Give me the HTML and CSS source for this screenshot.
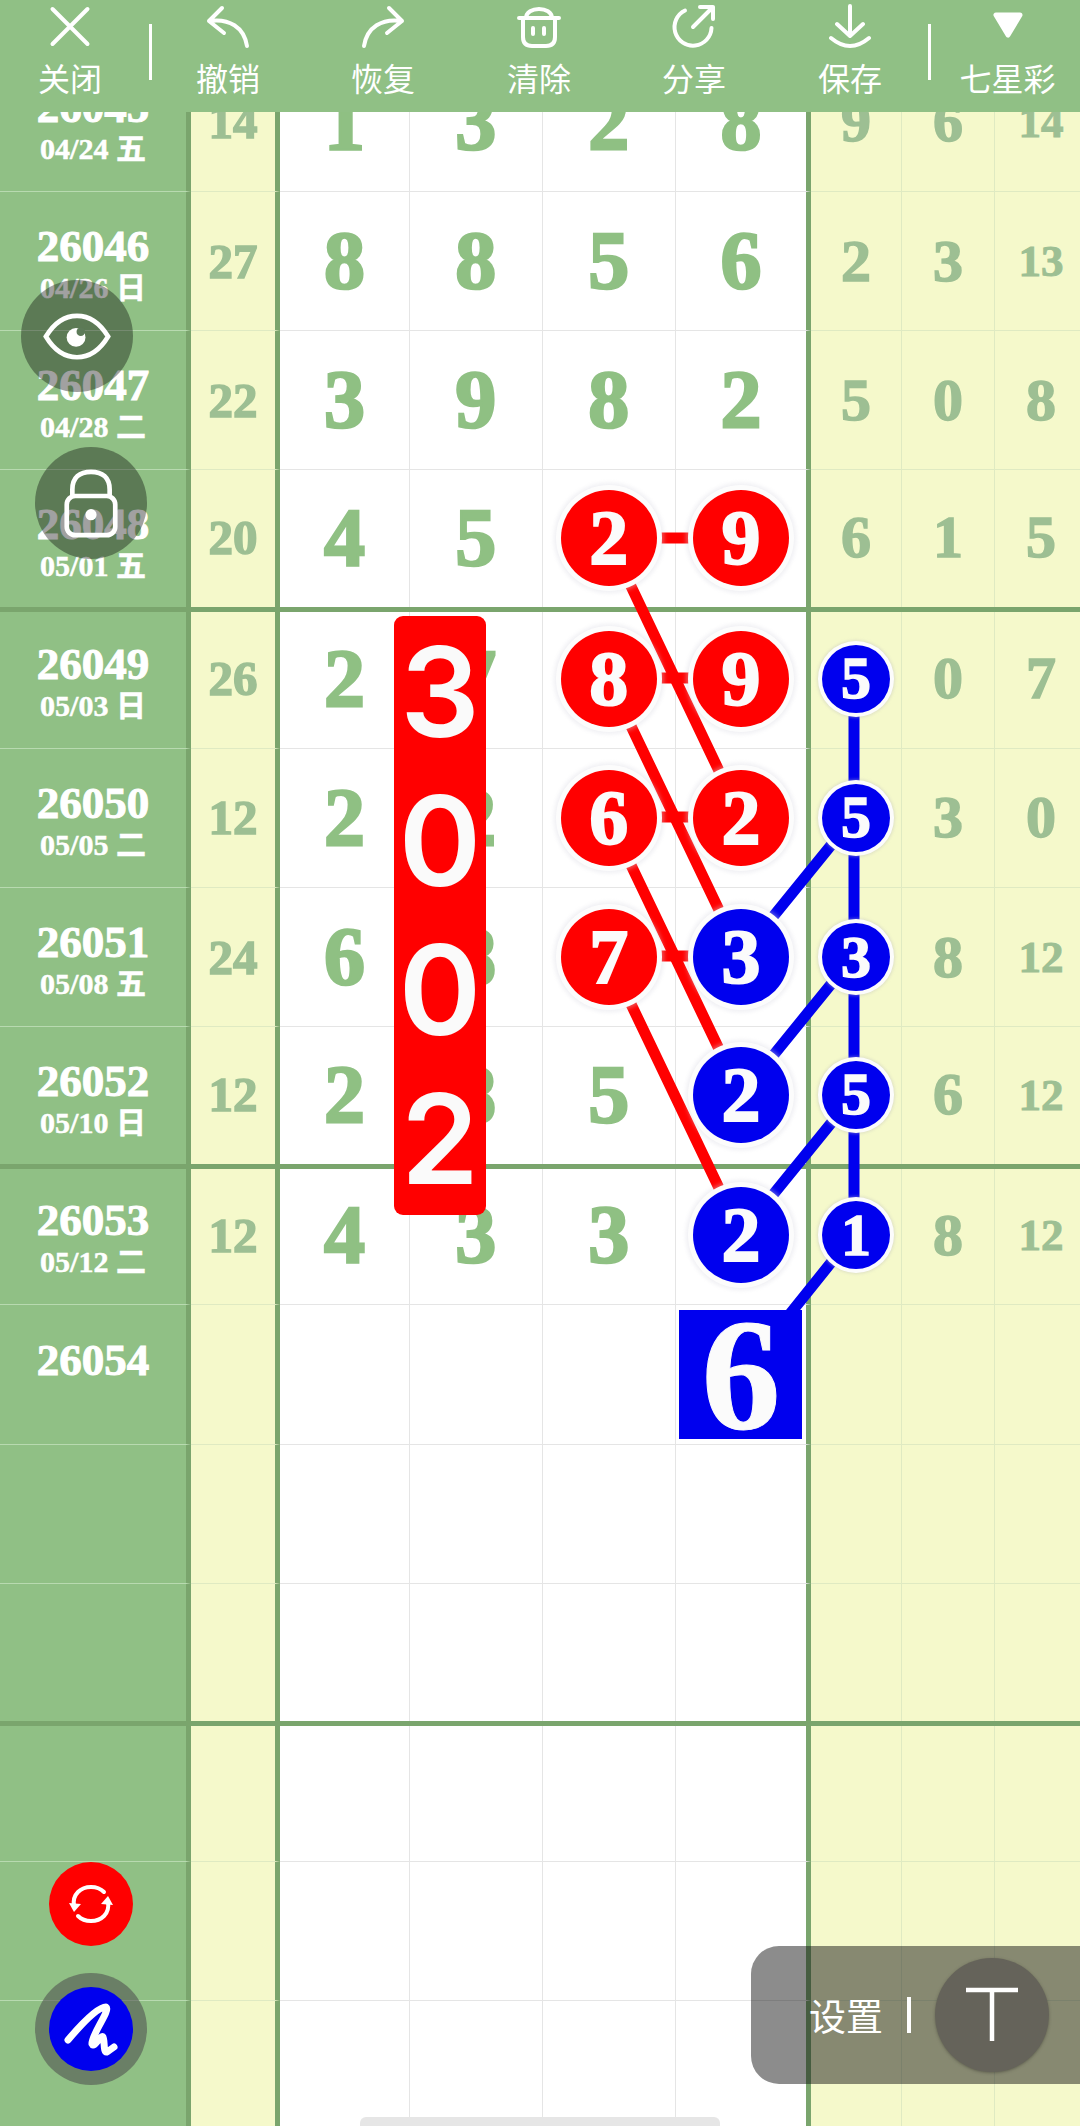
FILE: index.html
```html
<!DOCTYPE html>
<html lang="zh-CN">

<head>
    <meta charset="UTF-8">
    <meta name="viewport" content="width=device-width, initial-scale=1.0">
    <title>七星彩</title>
    <link rel="stylesheet" href="styles.css">
</head>

<body>
    <div class="page">

        <!-- 顶部工具栏 -->
        <div class="toolbar">
            <div class="tool">
                <svg viewBox="0 0 48 48"><path d="M6.5 6L41.5 41M41.5 6L6.5 41" /></svg>
                <span>关闭</span>
            </div>
            <i class="sep sep-end"></i>
            <div class="tool">
                <svg viewBox="0 0 48 48"><path d="M18 5L5 18L20 30M5 18C25 15 40 24 43 43" /></svg>
                <span>撤销</span>
            </div>
            <div class="tool">
                <svg viewBox="0 0 48 48"><path d="M30 5L43 18L28 30M43 18C23 15 8 24 5 43" /></svg>
                <span>恢复</span>
            </div>
            <div class="tool">
                <svg viewBox="0 0 48 48"><path d="M4 15H44M11 15C11 3 37 3 37 15M8 15V34Q8 43 17 43H31Q40 43 40 34V15M18 25V31M29 25V31" /></svg>
                <span>清除</span>
            </div>
            <div class="tool">
                <svg viewBox="0 0 48 48"><path d="M15 7.5A18.5 18.5 0 1 0 41.5 25M23 24L43 4M30 4H43V16" /></svg>
                <span>分享</span>
            </div>
            <div class="tool">
                <svg viewBox="0 0 48 48"><path d="M24 3V33M11 21L24 33L37 21M5 35Q24 51 43 35" /></svg>
                <span>保存</span>
            </div>
            <i class="sep"></i>
            <div class="tool">
                <svg viewBox="0 0 48 48"><path class="solid" d="M12 12H36L24 32Z" /></svg>
                <span>七星彩</span>
            </div>
        </div>

        <!-- 走势表 -->
        <div class="sheet">
            <div class="row">
                <div class="cell date"><b>26045</b><small>04/24 五</small></div>
                <div class="cell side">14</div>
                <div class="cell num">1</div><div class="cell num">3</div><div class="cell num">2</div><div class="cell num last">8</div>
                <div class="cell ext">9</div><div class="cell ext">6</div><div class="cell ext two">14</div>
            </div>
            <div class="row">
                <div class="cell date"><b>26046</b><small>04/26 日</small></div>
                <div class="cell side">27</div>
                <div class="cell num">8</div><div class="cell num">8</div><div class="cell num">5</div><div class="cell num last">6</div>
                <div class="cell ext">2</div><div class="cell ext">3</div><div class="cell ext two">13</div>
            </div>
            <div class="row">
                <div class="cell date"><b>26047</b><small>04/28 二</small></div>
                <div class="cell side">22</div>
                <div class="cell num">3</div><div class="cell num">9</div><div class="cell num">8</div><div class="cell num last">2</div>
                <div class="cell ext">5</div><div class="cell ext">0</div><div class="cell ext">8</div>
            </div>
            <div class="row row-end">
                <div class="cell date"><b>26048</b><small>05/01 五</small></div>
                <div class="cell side">20</div>
                <div class="cell num">4</div><div class="cell num">5</div>
                <div class="cell num"><span class="ball red">2</span></div>
                <div class="cell num last"><span class="ball red">9</span></div>
                <div class="cell ext">6</div><div class="cell ext">1</div><div class="cell ext">5</div>
            </div>

            <div class="row">
                <div class="cell date"><b>26049</b><small>05/03 日</small></div>
                <div class="cell side">26</div>
                <div class="cell num">2</div><div class="cell num">7</div>
                <div class="cell num"><span class="ball red">8</span></div>
                <div class="cell num last"><span class="ball red">9</span></div>
                <div class="cell ext"><span class="ball small">5</span></div>
                <div class="cell ext">0</div><div class="cell ext">7</div>
            </div>
            <div class="row">
                <div class="cell date"><b>26050</b><small>05/05 二</small></div>
                <div class="cell side">12</div>
                <div class="cell num">2</div><div class="cell num">2</div>
                <div class="cell num"><span class="ball red">6</span></div>
                <div class="cell num last"><span class="ball red">2</span></div>
                <div class="cell ext"><span class="ball small">5</span></div>
                <div class="cell ext">3</div><div class="cell ext">0</div>
            </div>
            <div class="row">
                <div class="cell date"><b>26051</b><small>05/08 五</small></div>
                <div class="cell side">24</div>
                <div class="cell num">6</div><div class="cell num">8</div>
                <div class="cell num"><span class="ball red">7</span></div>
                <div class="cell num last"><span class="ball blue">3</span></div>
                <div class="cell ext"><span class="ball small">3</span></div>
                <div class="cell ext">8</div><div class="cell ext two">12</div>
            </div>
            <div class="row row-end">
                <div class="cell date"><b>26052</b><small>05/10 日</small></div>
                <div class="cell side">12</div>
                <div class="cell num">2</div><div class="cell num">8</div><div class="cell num">5</div>
                <div class="cell num last"><span class="ball blue">2</span></div>
                <div class="cell ext"><span class="ball small">5</span></div>
                <div class="cell ext">6</div><div class="cell ext two">12</div>
            </div>

            <div class="row">
                <div class="cell date"><b>26053</b><small>05/12 二</small></div>
                <div class="cell side">12</div>
                <div class="cell num">4</div><div class="cell num">3</div><div class="cell num">3</div>
                <div class="cell num last"><span class="ball blue">2</span></div>
                <div class="cell ext"><span class="ball small">1</span></div>
                <div class="cell ext">8</div><div class="cell ext two">12</div>
            </div>
            <div class="row">
                <div class="cell date"><b>26054</b><small>&nbsp;</small></div>
                <div class="cell side"></div>
                <div class="cell num"></div><div class="cell num"></div><div class="cell num"></div>
                <div class="cell num last"><span class="pick">6</span></div>
                <div class="cell ext"></div><div class="cell ext"></div><div class="cell ext"></div>
            </div>
            <div class="row">
                <div class="cell date"></div><div class="cell side"></div>
                <div class="cell num"></div><div class="cell num"></div><div class="cell num"></div><div class="cell num last"></div>
                <div class="cell ext"></div><div class="cell ext"></div><div class="cell ext"></div>
            </div>
            <div class="row row-end">
                <div class="cell date"></div><div class="cell side"></div>
                <div class="cell num"></div><div class="cell num"></div><div class="cell num"></div><div class="cell num last"></div>
                <div class="cell ext"></div><div class="cell ext"></div><div class="cell ext"></div>
            </div>

            <div class="row">
                <div class="cell date"></div><div class="cell side"></div>
                <div class="cell num"></div><div class="cell num"></div><div class="cell num"></div><div class="cell num last"></div>
                <div class="cell ext"></div><div class="cell ext"></div><div class="cell ext"></div>
            </div>
            <div class="row">
                <div class="cell date"></div><div class="cell side"></div>
                <div class="cell num"></div><div class="cell num"></div><div class="cell num"></div><div class="cell num last"></div>
                <div class="cell ext"></div><div class="cell ext"></div><div class="cell ext"></div>
            </div>
            <div class="row">
                <div class="cell date"></div><div class="cell side"></div>
                <div class="cell num"></div><div class="cell num"></div><div class="cell num"></div><div class="cell num last"></div>
                <div class="cell ext"></div><div class="cell ext"></div><div class="cell ext"></div>
            </div>
        </div>

        <!-- 连线,画在号码球下面 -->
        <svg class="links" viewBox="0 0 1080 2126">
            <g class="link-red">
                <path d="M608 538H741M608 678H741M608 817H741M608 956H741" />
                <path d="M608 538L741 817M608 678L741 956M608 817L741 1095M608 956L741 1234" />
            </g>
            <g class="link-blue">
                <path d="M854 678V1234" />
                <path d="M854 817L741 956M854 956L741 1095M854 1095L741 1234M854 1234L741 1375" />
            </g>
        </svg>

        <div class="tag">
            <span>3</span>
            <span>0</span>
            <span>0</span>
            <span>2</span>
        </div>

        <!-- 左侧悬浮按钮 -->
        <div class="fab fab-eye">
            <svg width="68" height="49" viewBox="0 0 72 52">
                <path class="line" d="M3 26C12 11 24 4 36 4C48 4 60 11 69 26C60 41 48 48 36 48C24 48 12 41 3 26Z" />
                <circle class="dot" cx="35" cy="27" r="10" />
                <circle class="bite" cx="40" cy="21" r="4.5" />
            </svg>
        </div>
        <div class="fab fab-lock">
            <svg width="56" height="69" viewBox="0 0 60 74">
                <path class="line" d="M10 29V22C10 9 18 3 30 3C42 3 50 9 50 22V29" />
                <rect class="line" x="4" y="29" width="52" height="42" rx="9" />
                <circle class="dot" cx="30" cy="49" r="6" />
            </svg>
        </div>
        <div class="round fab-sync">
            <svg width="84" height="84" viewBox="0 0 84 84">
                <path class="line-thin" d="M25 44C23 32 32 25 42 25C48 25 52 27 55 30" />
                <path class="line-thin" d="M59 40C61 52 52 59 42 59C36 59 32 57 29 54" />
                <path class="dot" d="M20 41L32 42L25 50Z" />
                <path class="dot" d="M64 43L52 42L59 34Z" />
            </svg>
        </div>
        <div class="fab-pen-wrap">
            <div class="round fab-pen">
                <svg width="84" height="84" viewBox="0 0 84 84">
                    <path class="line-pen" d="M19 53C30 40 48 20 57 20C62 23 42 48 43 57C45 62 52 47 54 50C56 54 54 66 58 65L65 60" />
                </svg>
            </div>
        </div>

        <!-- 右下角设置 -->
        <div class="setting">
            <span class="setting-text">设置</span>
            <i class="setting-sep"></i>
            <div class="setting-btn">
                <svg width="60" height="60" viewBox="0 0 60 60"><path class="line-t" d="M4 5H56M30 5V56" /></svg>
            </div>
        </div>

        <div class="home-bar"></div>
    </div>
</body>

</html>
```

FILE: styles.css
```css
* {
    margin: 0;
    padding: 0;
    box-sizing: border-box;
}

html,
body {
    width: 1080px;
    height: 2126px;
    overflow: hidden;
}

.page {
    position: relative;
    width: 1080px;
    height: 2126px;
    overflow: hidden;
    background: #fff;
    font-family: "Liberation Serif", "Noto Sans CJK SC", serif;
}

/* 工具栏 */
.toolbar {
    position: absolute;
    top: 0;
    left: 0;
    z-index: 5;
    width: 1080px;
    height: 112px;
    background: #90c085;
    display: grid;
    grid-template-columns: 140px 12px 152px 158px 154px 156px 156px 3px 153px;
    color: #fff;
    font-family: "Noto Sans CJK SC", sans-serif;
}

.tool {
    display: flex;
    flex-direction: column;
    align-items: center;
    padding-top: 3px;
}

.tool svg {
    width: 48px;
    height: 48px;
    fill: none;
    stroke: #fff;
    stroke-width: 4;
    stroke-linecap: round;
    stroke-linejoin: round;
}

.tool svg .solid {
    fill: #fff;
    stroke-width: 5;
}

.tool span {
    font-size: 32px;
    line-height: 52px;
    white-space: nowrap;
}

.sep {
    display: block;
    width: 3px;
    height: 56px;
    margin-top: 24px;
    background: #fff;
}

.sep-end {
    justify-self: end;
}

/* 表格 */
.sheet {
    margin-top: 52.8px;
}

.row {
    position: relative;
    height: 139.2px;
    display: grid;
    grid-template-columns: 191px 89px 130px 132.7px 133.3px 135px 91px 93px 93px;
}

/* 每四期一条粗线 */
.row-end::after {
    content: "";
    position: absolute;
    left: 0;
    right: 0;
    bottom: -2.6px;
    z-index: 1;
    height: 5px;
    background: #7aa56d;
}

.row-end .cell {
    padding-bottom: 3px;
}

.cell {
    display: flex;
    align-items: center;
    justify-content: center;
    font-weight: bold;
    border-bottom: 1.5px solid #e5e5e5;
}

.date {
    flex-direction: column;
    padding-top: 12px;
    background: #90c085;
    color: #fff;
    border-right: 5px solid #7aa56d;
    border-bottom-color: #b8dab0;
}

.row-end .date {
    padding: 12px 0 0;
}

.date b {
    font-size: 45px;
    line-height: 42px;
    -webkit-text-stroke: 1px #fff;
}

.date small {
    font-size: 30px;
    line-height: 42px;
    height: 42px;
    white-space: nowrap;
    -webkit-text-stroke: .5px #fff;
}

.side {
    background: #f5f9cb;
    color: #9dbf93;
    font-size: 49px;
    -webkit-text-stroke: 1.5px #9dbf93;
    border-right: 5.5px solid #7aa56d;
    border-bottom-color: #dfeac2;
}

.num {
    color: #8fc083;
    font-size: 82px;
    -webkit-text-stroke: 2.5px #8fc083;
    border-right: 1.5px solid #e5e5e5;
}

.num.last {
    border-right: 5px solid #7aa56d;
}

.ext {
    background: #f5f9cb;
    color: #9dbf93;
    font-size: 60px;
    -webkit-text-stroke: 1.5px #9dbf93;
    border-right: 1.5px solid #dfeac2;
    border-bottom-color: #dfeac2;
}

.ext.two {
    font-size: 45px;
    -webkit-text-stroke: 1px #9dbf93;
}

/* 号码球 */
.ball {
    position: relative;
    z-index: 2;
    flex: none;
    width: 96px;
    height: 96px;
    border-radius: 50%;
    display: flex;
    align-items: center;
    justify-content: center;
    color: #fbfbfb;
    font-size: 78px;
    -webkit-text-stroke: 2px #fbfbfb;
    box-shadow: 0 0 0 5px #fcfcfc, 0 0 4px 7px rgba(215, 215, 225, .4);
}

.red {
    background: #f00;
}

.blue {
    background: #00e;
}

.small {
    width: 68px;
    height: 68px;
    background: #00e;
    font-size: 60px;
    -webkit-text-stroke: 1.5px #fbfbfb;
    box-shadow: 0 0 0 4px #fcfcfc, 0 0 3px 5px rgba(190, 190, 190, .4);
}

.pick {
    position: relative;
    z-index: 2;
    flex: none;
    width: 123px;
    height: 129px;
    display: flex;
    align-items: center;
    justify-content: center;
    background: #00e;
    color: #fbfbfb;
    font-size: 158px;
    -webkit-text-stroke: 1px #fbfbfb;
}

/* 连线 */
.links {
    position: absolute;
    top: 0;
    left: 0;
    z-index: 1;
    width: 1080px;
    height: 2126px;
    fill: none;
    stroke-width: 11;
}

.link-red {
    stroke: #f00;
}

.link-blue {
    stroke: #00e;
}

.tag {
    position: absolute;
    top: 616px;
    left: 394px;
    z-index: 3;
    width: 92px;
    height: 599px;
    padding-top: 1px;
    border-radius: 9px;
    background: #f00;
    color: #fafafa;
    font-family: "Inter", "Liberation Sans", sans-serif;
    font-size: 125px;
    font-weight: 600;
    line-height: 149px;
    text-align: center;
}

.tag span {
    display: block;
}

/* 悬浮按钮 */
.fab,
.round,
.fab-pen-wrap {
    position: absolute;
    z-index: 4;
    border-radius: 50%;
    display: flex;
    align-items: center;
    justify-content: center;
}

.fab {
    width: 112px;
    height: 112px;
    background: rgba(8, 8, 8, .38);
}

.fab-eye {
    top: 280px;
    left: 21px;
}

.fab-lock {
    top: 447px;
    left: 35px;
}

.round {
    width: 84px;
    height: 84px;
}

.fab-sync {
    top: 1862px;
    left: 49px;
    background: #f00;
}

.fab-pen-wrap {
    top: 1973px;
    left: 35px;
    width: 112px;
    height: 112px;
    background: rgba(80, 80, 80, .58);
}

.fab-pen {
    position: static;
    background: #00e;
}

.line {
    fill: none;
    stroke: #fff;
    stroke-width: 5;
}

.line-thin {
    fill: none;
    stroke: #fff;
    stroke-width: 4;
    stroke-linecap: round;
}

.line-pen {
    fill: none;
    stroke: #fff;
    stroke-width: 7;
    stroke-linecap: round;
    stroke-linejoin: round;
}

.dot {
    fill: #fff;
}

.bite {
    fill: #5d7b59;
}

/* 设置 */
.setting {
    position: absolute;
    top: 1946px;
    left: 751px;
    z-index: 4;
    width: 329px;
    height: 138px;
    padding-left: 58px;
    border-radius: 28px 0 0 28px;
    background: rgba(15, 15, 15, .48);
    display: flex;
    align-items: center;
    color: #fff;
    font-family: "Noto Sans CJK SC", sans-serif;
}

.setting-text {
    font-size: 37px;
    line-height: 50px;
    white-space: nowrap;
}

.setting-sep {
    width: 4px;
    height: 36px;
    margin-left: 24px;
    background: #fff;
}

.setting-btn {
    width: 114px;
    height: 114px;
    margin-left: 24px;
    border-radius: 50%;
    background: #65635a;
    box-shadow: 0 1px 3px rgba(60, 60, 50, .5);
    display: flex;
    align-items: center;
    justify-content: center;
}

.line-t {
    fill: none;
    stroke: #fff;
    stroke-width: 4.5;
}

.home-bar {
    position: absolute;
    bottom: 0;
    left: 360px;
    z-index: 4;
    width: 360px;
    height: 9px;
    border-radius: 6px 6px 0 0;
    background: #e6e6e6;
}
```
